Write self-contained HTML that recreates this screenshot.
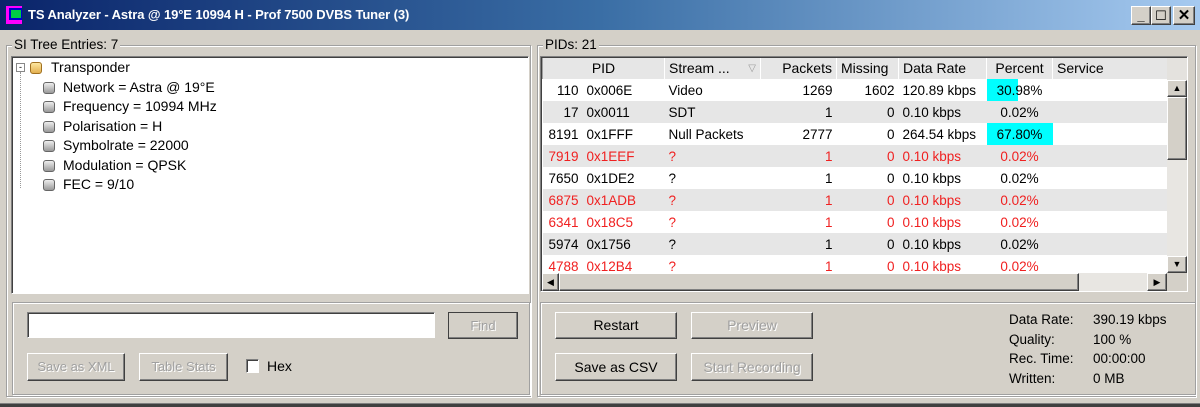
<!DOCTYPE html>
<html><head><style>
*{box-sizing:border-box;margin:0;padding:0}
body{width:1200px;height:407px;background:#d4d0c8;font-family:"Liberation Sans",sans-serif;font-size:13px;color:#000;position:relative;overflow:hidden}
.a{position:absolute}
.title{left:0;top:0;width:1200px;height:30px;background:linear-gradient(90deg,#0a246a 0%,#3a6ea5 50%,#a6caf0 100%);color:#fff;font-weight:bold;font-size:13px;letter-spacing:-0.1px;line-height:30px;padding-left:28px}
.sunk{border:1px solid;border-color:#808080 #fff #fff #808080;box-shadow:inset 1px 1px 0 #404040}
.grp{border:1px solid #a0a0a0;box-shadow:1px 1px 0 #fff inset,1px 1px 0 #fff}
.btn{background:#d4d0c8;border:1px solid;border-color:#fff #404040 #404040 #fff;box-shadow:inset -1px -1px 0 #808080;text-align:center;font-size:13px}
.dis{color:#a0a0a0;text-shadow:1px 1px 0 #fff}
.tree div{height:19.5px;line-height:19.5px;position:relative;padding-left:50px;font-size:14px}
.ic{position:absolute;left:30px;top:4px;width:12px;height:12px;border-radius:3px;background:linear-gradient(#eee,#999);border:1px solid #666}
table{border-collapse:collapse;font-size:13.5px}
td{height:22px;padding:0 4px;white-space:nowrap}
tr:nth-child(odd) td{background:#e6e6e6}
.r td{color:#f02020}
td.th{background:#e4e2de;border-right:1px solid #fff;border-left:1px solid #a0a0a0;height:21px;line-height:21px;font-size:14px}
</style></head><body>
<div class="a title">TS Analyzer - Astra @ 19°E 10994 H - Prof 7500 DVBS Tuner (3)</div>
<div class="a" style="left:6px;top:6px;width:16px;height:18px;background:#f0f;"></div>
<div class="a" style="left:9px;top:8px;width:13px;height:12px;background:#00c;"></div>
<div class="a" style="left:11px;top:10px;width:10px;height:8px;background:#0c4"></div>
<div class="a btn" style="left:1131px;top:6px;width:20px;height:19px;line-height:17px;font-weight:bold">_</div>
<div class="a btn" style="left:1151px;top:6px;width:20px;height:19px;line-height:17px">☐</div>
<div class="a btn" style="left:1173px;top:6px;width:22px;height:19px;line-height:18px;font-weight:bold;font-size:15px">✕</div>

<div class="a grp" style="left:6px;top:45px;width:525px;height:352px"></div>
<div class="a" style="left:12px;top:37px;background:#d4d0c8;padding:0 2px;font-size:13.5px">SI Tree Entries: 7</div>
<div class="a sunk" style="left:11px;top:56px;width:518px;height:238px;background:#fff"></div>
<div class="a tree" style="left:13px;top:58px;width:510px">
<div style="padding-left:38px"><span class="a" style="left:3px;top:5px;width:9px;height:9px;border:1px solid #888;font-size:9px;line-height:7px;text-align:center">-</span><span class="ic" style="left:17px;background:linear-gradient(#fde7a0,#e3b050);border-color:#a07020"></span>Transponder</div>
<div><span class="ic"></span>Network = Astra @ 19°E</div>
<div><span class="ic"></span>Frequency = 10994 MHz</div>
<div><span class="ic"></span>Polarisation = H</div>
<div><span class="ic"></span>Symbolrate = 22000</div>
<div><span class="ic"></span>Modulation = QPSK</div>
<div><span class="ic"></span>FEC = 9/10</div>
</div>
<div class="a" style="left:20px;top:72px;width:1px;height:116px;border-left:1px dotted #999"></div>
<div class="a grp" style="left:12px;top:302px;width:518px;height:93px"></div>
<div class="a sunk" style="left:27px;top:312px;width:408px;height:26px;background:#fff"></div>
<div class="a btn dis" style="left:448px;top:312px;width:70px;height:27px;line-height:25px;border-color:#404040;">Find</div>
<div class="a btn dis" style="left:27px;top:353px;width:98px;height:28px;line-height:26px">Save as XML</div>
<div class="a btn dis" style="left:139px;top:353px;width:89px;height:28px;line-height:26px">Table Stats</div>
<div class="a sunk" style="left:246px;top:359px;width:13px;height:14px;background:#fff"></div>
<div class="a" style="left:267px;top:358px;font-size:14px">Hex</div>

<div class="a grp" style="left:537px;top:45px;width:659px;height:352px"></div>
<div class="a" style="left:543px;top:37px;background:#d4d0c8;padding:0 2px;font-size:13.5px">PIDs: 21</div>
<div class="a sunk" style="left:540px;top:56px;width:648px;height:236px;background:#fff;overflow:hidden">
<table style="position:absolute;left:1px;top:1px;width:625px;table-layout:fixed">
<colgroup><col style="width:40px"><col style="width:82px"><col style="width:96px"><col style="width:76px"><col style="width:62px"><col style="width:88px"><col style="width:66px"><col style="width:115px"></colgroup>
<tr><td class="th" colspan="2" style="text-align:center">PID</td><td class="th">Stream ... <span style="color:#999;float:right;font-size:10px">▽</span></td><td class="th" style="text-align:right">Packets</td><td class="th">Missing</td><td class="th">Data Rate</td><td class="th" style="text-align:center">Percent</td><td class="th">Service</td></tr>
<tr><td align=right>110</td><td>0x006E</td><td>Video</td><td align=right>1269</td><td align=right>1602</td><td>120.89 kbps</td><td align=center style="background:linear-gradient(90deg,#0ff 47%,transparent 47%)">30.98%</td><td></td></tr>
<tr><td align=right>17</td><td>0x0011</td><td>SDT</td><td align=right>1</td><td align=right>0</td><td>0.10 kbps</td><td align=center>0.02%</td><td></td></tr>
<tr><td align=right>8191</td><td>0x1FFF</td><td>Null Packets</td><td align=right>2777</td><td align=right>0</td><td>264.54 kbps</td><td align=center style="background:#0ff">67.80%</td><td></td></tr>
<tr class="r"><td align=right>7919</td><td>0x1EEF</td><td>?</td><td align=right>1</td><td align=right>0</td><td>0.10 kbps</td><td align=center>0.02%</td><td></td></tr>
<tr><td align=right>7650</td><td>0x1DE2</td><td>?</td><td align=right>1</td><td align=right>0</td><td>0.10 kbps</td><td align=center>0.02%</td><td></td></tr>
<tr class="r"><td align=right>6875</td><td>0x1ADB</td><td>?</td><td align=right>1</td><td align=right>0</td><td>0.10 kbps</td><td align=center>0.02%</td><td></td></tr>
<tr class="r"><td align=right>6341</td><td>0x18C5</td><td>?</td><td align=right>1</td><td align=right>0</td><td>0.10 kbps</td><td align=center>0.02%</td><td></td></tr>
<tr><td align=right>5974</td><td>0x1756</td><td>?</td><td align=right>1</td><td align=right>0</td><td>0.10 kbps</td><td align=center>0.02%</td><td></td></tr>
<tr class="r"><td align=right>4788</td><td>0x12B4</td><td>?</td><td align=right>1</td><td align=right>0</td><td>0.10 kbps</td><td align=center>0.02%</td><td></td></tr>
</table>
<div class="a" style="left:626px;top:1px;width:20px;height:22px;background:#e4e2de"></div>
<div class="a" style="left:626px;top:23px;width:20px;height:193px;background:#e8e6e2"></div>
<div class="a btn" style="left:626px;top:23px;width:20px;height:17px;font-size:9px;line-height:15px">▲</div>
<div class="a btn" style="left:626px;top:40px;width:20px;height:63px"></div>
<div class="a btn" style="left:626px;top:199px;width:20px;height:17px;font-size:9px;line-height:15px">▼</div>
<div class="a" style="left:1px;top:216px;width:645px;height:18px;background:#e8e6e2"></div>
<div class="a btn" style="left:1px;top:216px;width:17px;height:18px;font-size:9px;line-height:16px">◀</div>
<div class="a btn" style="left:18px;top:216px;width:520px;height:18px"></div>
<div class="a btn" style="left:606px;top:216px;width:20px;height:18px;font-size:9px;line-height:16px">▶</div>
<div class="a" style="left:626px;top:216px;width:20px;height:18px;background:#d4d0c8"></div>
</div>
<div class="a grp" style="left:540px;top:302px;width:656px;height:93px"></div>
<div class="a btn" style="left:555px;top:312px;width:122px;height:27px;line-height:25px;font-size:14px">Restart</div>
<div class="a btn dis" style="left:691px;top:312px;width:122px;height:27px;line-height:25px;font-size:14px">Preview</div>
<div class="a btn" style="left:555px;top:353px;width:122px;height:28px;line-height:26px;font-size:14px">Save as CSV</div>
<div class="a btn dis" style="left:691px;top:353px;width:122px;height:28px;line-height:26px;font-size:14px">Start Recording</div>
<div class="a" style="left:1009px;top:310px;line-height:19.5px;font-size:13.5px">Data Rate:<br>Quality:<br>Rec. Time:<br>Written:</div>
<div class="a" style="left:1093px;top:310px;line-height:19.5px;font-size:13.5px">390.19 kbps<br>100 %<br>00:00:00<br>0 MB</div>
<div class="a" style="left:0;top:403px;width:1200px;height:4px;border-top:1px solid #808080;background:#404040"></div>
</body></html>
